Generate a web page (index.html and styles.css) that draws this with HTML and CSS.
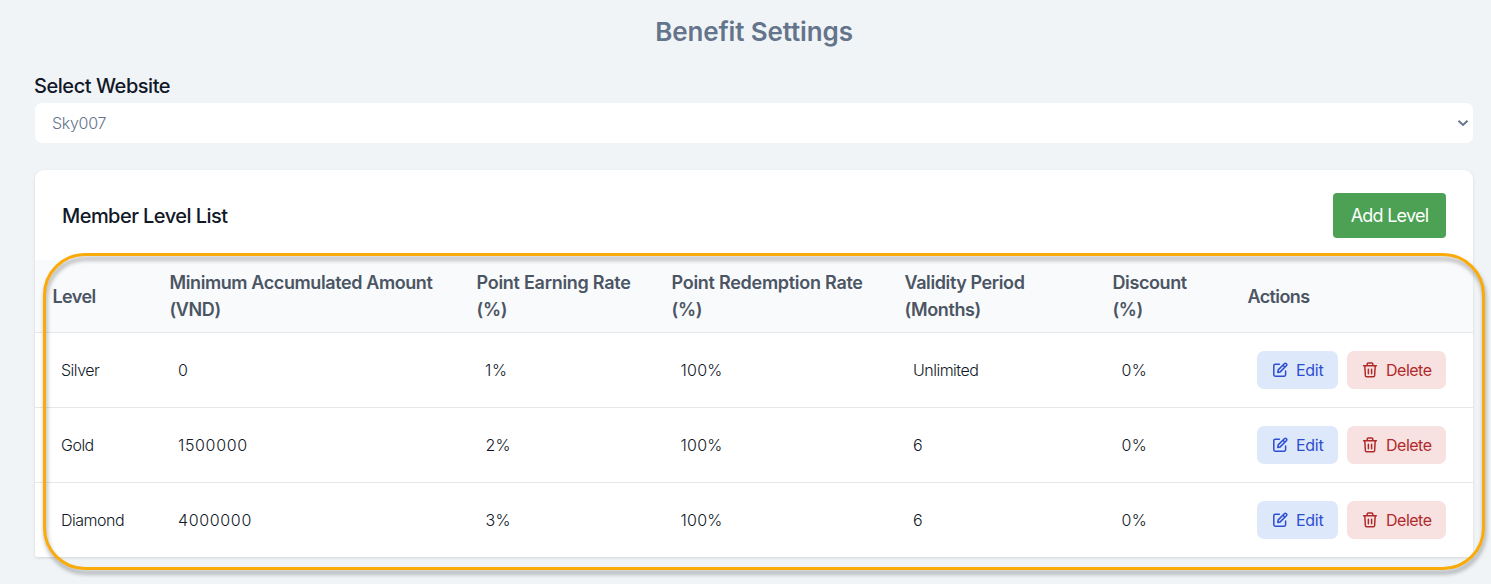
FILE: index.html
```html
<!DOCTYPE html>
<html lang="en">
<head>
<meta charset="utf-8">
<title>Benefit Settings</title>
<link rel="stylesheet" href="styles.css">
</head>
<body>
<svg class="sprite" aria-hidden="true">
  <symbol id="edit" viewBox="0 0 18 18">
    <path d="M8.4 3.2H4.2Q2.8 3.2 2.8 4.6V13.8Q2.8 15.2 4.2 15.2H13.2Q14.6 15.2 14.6 13.8V10"/>
    <path d="M6.8 11.4 7.2 8.9 13.6 2.5Q14.3 1.8 15 2.5L15.6 3.1Q16.3 3.8 15.6 4.5L9.2 10.9ZM12 4.2 14 6.2"/>
  </symbol>
  <symbol id="trash" viewBox="0 0 18 18">
    <path d="M2.6 4.8H15.4M6.2 4.5V3Q6.2 2 7.2 2H10.8Q11.8 2 11.8 3V4.5M3.8 5 4.4 14.8Q4.5 15.8 5.5 15.8H12.5Q13.5 15.8 13.6 14.8L14.2 5M7.4 8.2V12.8M10.6 8.2V12.8"/>
  </symbol>
</svg>
<main class="page">
  <h1 class="title">Benefit Settings</h1>
  <label class="label">Select Website</label>
  <div class="select"><span class="value">Sky007</span>
    <svg class="chevron" viewBox="0 0 12 8"><path d="M1.5 1.8 6 6 10.5 1.8"/></svg>
  </div>
  <section class="card">
    <header class="card-head"><h2 class="card-title">Member Level List</h2><button class="add">Add Level</button></header>
    <div class="row head">
      <div class="snug">Level</div>
      <div class="wide">Minimum Accumulated Amount<br>(VND)</div>
      <div>Point Earning Rate<br>(%)</div>
      <div>Point Redemption Rate<br>(%)</div>
      <div class="wide">Validity Period<br>(Months)</div>
      <div class="wide">Discount<br>(%)</div>
      <div class="snug">Actions</div>
    </div>
    <div class="row"><div>Silver</div><div class="num">0</div><div class="num">1%</div><div class="pct">100%</div><div>Unlimited</div><div class="pct">0%</div>
      <div class="actions"><button class="btn edit"><svg><use href="#edit"/></svg><span>Edit</span></button><button class="btn delete"><svg><use href="#trash"/></svg><span>Delete</span></button></div></div>
    <div class="row"><div>Gold</div><div class="num">1500000</div><div class="pct">2%</div><div class="pct">100%</div><div>6</div><div class="pct">0%</div>
      <div class="actions"><button class="btn edit"><svg><use href="#edit"/></svg><span>Edit</span></button><button class="btn delete"><svg><use href="#trash"/></svg><span>Delete</span></button></div></div>
    <div class="row"><div>Diamond</div><div class="num">4000000</div><div class="pct">3%</div><div class="pct">100%</div><div>6</div><div class="pct">0%</div>
      <div class="actions"><button class="btn edit"><svg><use href="#edit"/></svg><span>Edit</span></button><button class="btn delete"><svg><use href="#trash"/></svg><span>Delete</span></button></div></div>
  </section>
</main>
<div class="highlight"></div>
</body>
</html>
```
FILE: styles.css
```css
* { box-sizing: border-box; }
body { margin: 0; height: 584px; overflow: hidden; background: #f0f4f7; font-family: Inter, "Liberation Sans", sans-serif; color: #111827; }
.sprite { display: none; }
.page { padding: 14px 18px 0 35px; }
.title { margin: 0; font-size: 26px; line-height: 36px; font-weight: 600; letter-spacing: -.13px; text-align: center; color: #64748b; }
.label { display: block; margin: 22px 0 0 -1px; font-size: 20px; line-height: 28px; font-weight: 450; letter-spacing: -.45px; }
.select { display: flex; align-items: center; justify-content: space-between; height: 40px; margin-top: 3px; padding: 0 4px 0 17px; border-radius: 7px; background: #fff; font-size: 16px; font-weight: 300; letter-spacing: -.3px; color: #64748b; }
.chevron { width: 12px; height: 8px; fill: none; stroke: #64748b; stroke-width: 2; }
.card { height: 387px; margin-top: 27px; border-radius: 9px 9px 2px 2px; background: #fff; box-shadow: 0 1px 3px #0000001f; }
.card-head { display: flex; align-items: center; justify-content: space-between; height: 90px; padding: 0 27px; }
.card-title { margin: 0; padding-top: 2px; font-size: 20px; font-weight: 450; letter-spacing: -.55px; }
.add { height: 45px; width: 113px; margin-top: 1px; border: 0; border-radius: 4px; padding: 0; background: #4ca154; color: #fff; font: 400 18px Inter, sans-serif; letter-spacing: -.75px; white-space: nowrap; }
.row { display: grid; grid-template-columns: 117px 307px 195px 233px 208px 135px 243px; align-items: center; height: 75px; border-top: 1px solid #e5e7eb; font-size: 16px; font-weight: 300; letter-spacing: -.5px; }
.row > div { padding-left: 26px; white-space: nowrap; }
.row .num { letter-spacing: .65px; }
.row .pct { padding-left: 26.5px; letter-spacing: .25px; }
.row.head { height: 72px; border-top: 0; background: #f9fafc; color: #4b5563; font-size: 18px; line-height: 27px; font-weight: 600; letter-spacing: -.27px; }
.row.head > div { padding-left: 17.5px; }
.row .wide { letter-spacing: -.4px; }
.row .snug { letter-spacing: -.6px; }
.row .actions { display: flex; gap: 9px; padding-left: 27px; }
.btn { display: flex; align-items: center; gap: 7px; height: 38px; padding: 0 0 0 14px; border: 0; border-radius: 7px; font: 400 16px Inter, sans-serif; letter-spacing: -.3px; }
.btn svg { width: 18px; height: 18px; fill: none; stroke: currentColor; stroke-width: 1.5; stroke-linejoin: round; stroke-linecap: round; }
.edit { width: 81px; background: #dde8fb; color: #2d4ed0; }
.delete { width: 99px; background: #f8e1e1; color: #b02a2a; letter-spacing: -.5px; }
.highlight { position: absolute; left: 43px; top: 253px; width: 1442px; height: 317px; border: 3px solid #faab09; border-radius: 42px; filter: drop-shadow(1px 4px 2px #0000005c); }
```
